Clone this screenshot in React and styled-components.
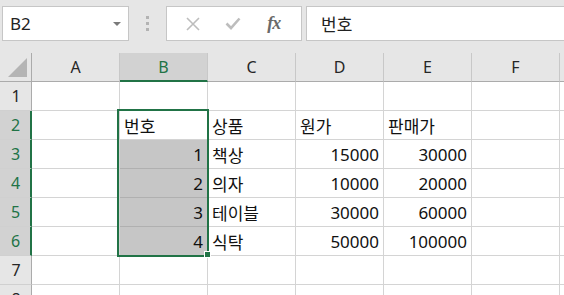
import React from "react";
import styled, { createGlobalStyle, css } from "styled-components";

const GREEN = "#217346";

const GlobalStyle = createGlobalStyle`
  html, body {
    margin: 0;
    padding: 0;
    background: #e6e6e6;
    overflow: hidden;
  }
  * { box-sizing: border-box; }
`;

const Page = styled.div`
  width: 564px;
  height: 295px;
  overflow: hidden;
  background: #e6e6e6;
  font-family: "Noto Sans", "Noto Sans CJK KR", sans-serif;
`;

const FormulaBar = styled.div`
  display: flex;
  align-items: flex-start;
  height: 53px;
  padding: 6px 0 0 2px;
`;

const NameBox = styled.div`
  position: relative;
  width: 127px;
  height: 35px;
  background: #fff;
  border: 1px solid #c6c6c6;
  display: flex;
  align-items: center;
  padding-left: 7px;
  font-size: 17px;
  color: #222;
`;

const Caret = styled.span`
  position: absolute;
  right: 7px;
  top: 15px;
  width: 0;
  height: 0;
  border-left: 4px solid transparent;
  border-right: 4px solid transparent;
  border-top: 4px solid #7a7a7a;
`;

const Grip = styled.div`
  width: 37px;
  height: 35px;
  display: flex;
  flex-direction: column;
  align-items: center;
  justify-content: center;
  gap: 3px;
  > span {
    width: 3px;
    height: 3px;
    background: #b3b3b3;
  }
`;

const FxBox = styled.div`
  width: 136px;
  height: 35px;
  background: #fff;
  border: 1px solid #c6c6c6;
  display: flex;
  align-items: center;
  justify-content: space-around;
  padding: 0 8px 0 6px;
`;

const Fx = styled.span`
  font-family: "Liberation Serif", "DejaVu Serif", serif;
  font-style: italic;
  font-weight: bold;
  font-size: 18px;
  color: #6a6a6a;
  letter-spacing: -1px;
`;

const FormulaInput = styled.div`
  flex: 1;
  margin-left: 4px;
  height: 35px;
  background: #fff;
  border: 1px solid #c6c6c6;
  border-right: none;
  display: flex;
  align-items: center;
  padding-left: 14px;
  font-family: "Noto Sans CJK KR", sans-serif;
  font-size: 17px;
  color: #222;
`;

const SheetWrap = styled.div`
  position: relative;
`;

const Sheet = styled.div`
  display: grid;
  grid-template-columns: 32px repeat(6, 88px) 1fr;
  grid-template-rows: 29px repeat(8, 29px);
  background: #fff;
`;

const HeaderCell = styled.div`
  background: ${({ $active }) => ($active ? "#d2d2d2" : "#e6e6e6")};
  color: ${({ $active }) => ($active ? GREEN : "#262626")};
  border-right: 1px solid #c8c8c8;
  border-bottom: ${({ $active }) => ($active ? `2px solid ${GREEN}` : "1px solid #ababab")};
  display: flex;
  align-items: center;
  justify-content: center;
  font-size: 16px;
  padding-top: ${({ $active }) => ($active ? "1px" : "0")};
`;

const Corner = styled.div`
  background: #e6e6e6;
  border-right: 1px solid #ababab;
  border-bottom: 1px solid #ababab;
  position: relative;
  svg { position: absolute; left: 7px; top: 5px; }
`;

const RowHead = styled.div`
  background: ${({ $active }) => ($active ? "#d2d2d2" : "#e6e6e6")};
  color: ${({ $active }) => ($active ? GREEN : "#262626")};
  border-right: ${({ $active }) => ($active ? `2px solid ${GREEN}` : "1px solid #ababab")};
  border-bottom: 1px solid #d0d0d0;
  display: flex;
  align-items: center;
  justify-content: center;
  font-size: 16px;
  padding-left: 1px;
`;

const Cell = styled.div`
  border-right: 1px solid #d4d4d4;
  border-bottom: 1px solid #d4d4d4;
  display: flex;
  align-items: flex-end;
  padding: 0 4px 2px 4px;
  font-size: 17px;
  color: #111;
  white-space: nowrap;
  font-family: ${({ $num }) =>
    $num ? `"Noto Sans", sans-serif` : `"Noto Sans CJK KR", sans-serif`};
  justify-content: ${({ $num }) => ($num ? "flex-end" : "flex-start")};
  line-height: 1.3;
  ${({ $sel }) =>
    $sel &&
    css`
      background: #c6c6c6;
      border-bottom-color: #b0b0b0;
    `}
`;

const Selection = styled.div`
  position: absolute;
  left: 117px;
  top: 56px;
  width: 92px;
  height: 148px;
  border: 2px solid ${GREEN};
  pointer-events: none;
`;

const FillHandle = styled.div`
  position: absolute;
  left: 204px;
  top: 198px;
  width: 7px;
  height: 7px;
  background: ${GREEN};
  border: 1px solid #fff;
`;

const cols = ["A", "B", "C", "D", "E", "F"];

const data = {
  2: ["", "번호", "상품", "원가", "판매가", ""],
  3: ["", 1, "책상", 15000, 30000, ""],
  4: ["", 2, "의자", 10000, 20000, ""],
  5: ["", 3, "테이블", 30000, 60000, ""],
  6: ["", 4, "식탁", 50000, 100000, ""],
};

const XIcon = () => (
  <svg width="14" height="14" viewBox="0 0 14 14">
    <path d="M1 1L13 13M13 1L1 13" stroke="#bdbdbd" strokeWidth="1.6" fill="none" />
  </svg>
);

const CheckIcon = () => (
  <svg width="16" height="13" viewBox="0 0 16 13">
    <path d="M1.5 6.5L6 11L14.5 1.5" stroke="#bdbdbd" strokeWidth="2.6" fill="none" />
  </svg>
);

export default function App() {
  const rows = [1, 2, 3, 4, 5, 6, 7, 8];
  return (
    <Page>
      <GlobalStyle />
      <FormulaBar>
        <NameBox>
          B2
          <Caret />
        </NameBox>
        <Grip>
          <span />
          <span />
          <span />
        </Grip>
        <FxBox>
          <XIcon />
          <CheckIcon />
          <Fx>fx</Fx>
        </FxBox>
        <FormulaInput>번호</FormulaInput>
      </FormulaBar>
      <SheetWrap>
        <Sheet>
          <Corner>
            <svg width="20" height="20" viewBox="0 0 20 20">
              <polygon points="20,0 20,19 1,19" fill="#b4b4b4" />
            </svg>
          </Corner>
          {cols.map((c) => (
            <HeaderCell key={c} $active={c === "B"}>
              {c}
            </HeaderCell>
          ))}
          <HeaderCell />
          {rows.map((r) => (
            <React.Fragment key={r}>
              <RowHead $active={r >= 2 && r <= 6}>{r}</RowHead>
              {cols.map((c, i) => {
                const v = data[r] ? data[r][i] : "";
                return (
                  <Cell
                    key={c}
                    $num={typeof v === "number"}
                    $sel={c === "B" && r >= 3 && r <= 6}
                  >
                    {v}
                  </Cell>
                );
              })}
              <Cell />
            </React.Fragment>
          ))}
        </Sheet>
        <Selection />
        <FillHandle />
      </SheetWrap>
    </Page>
  );
}
